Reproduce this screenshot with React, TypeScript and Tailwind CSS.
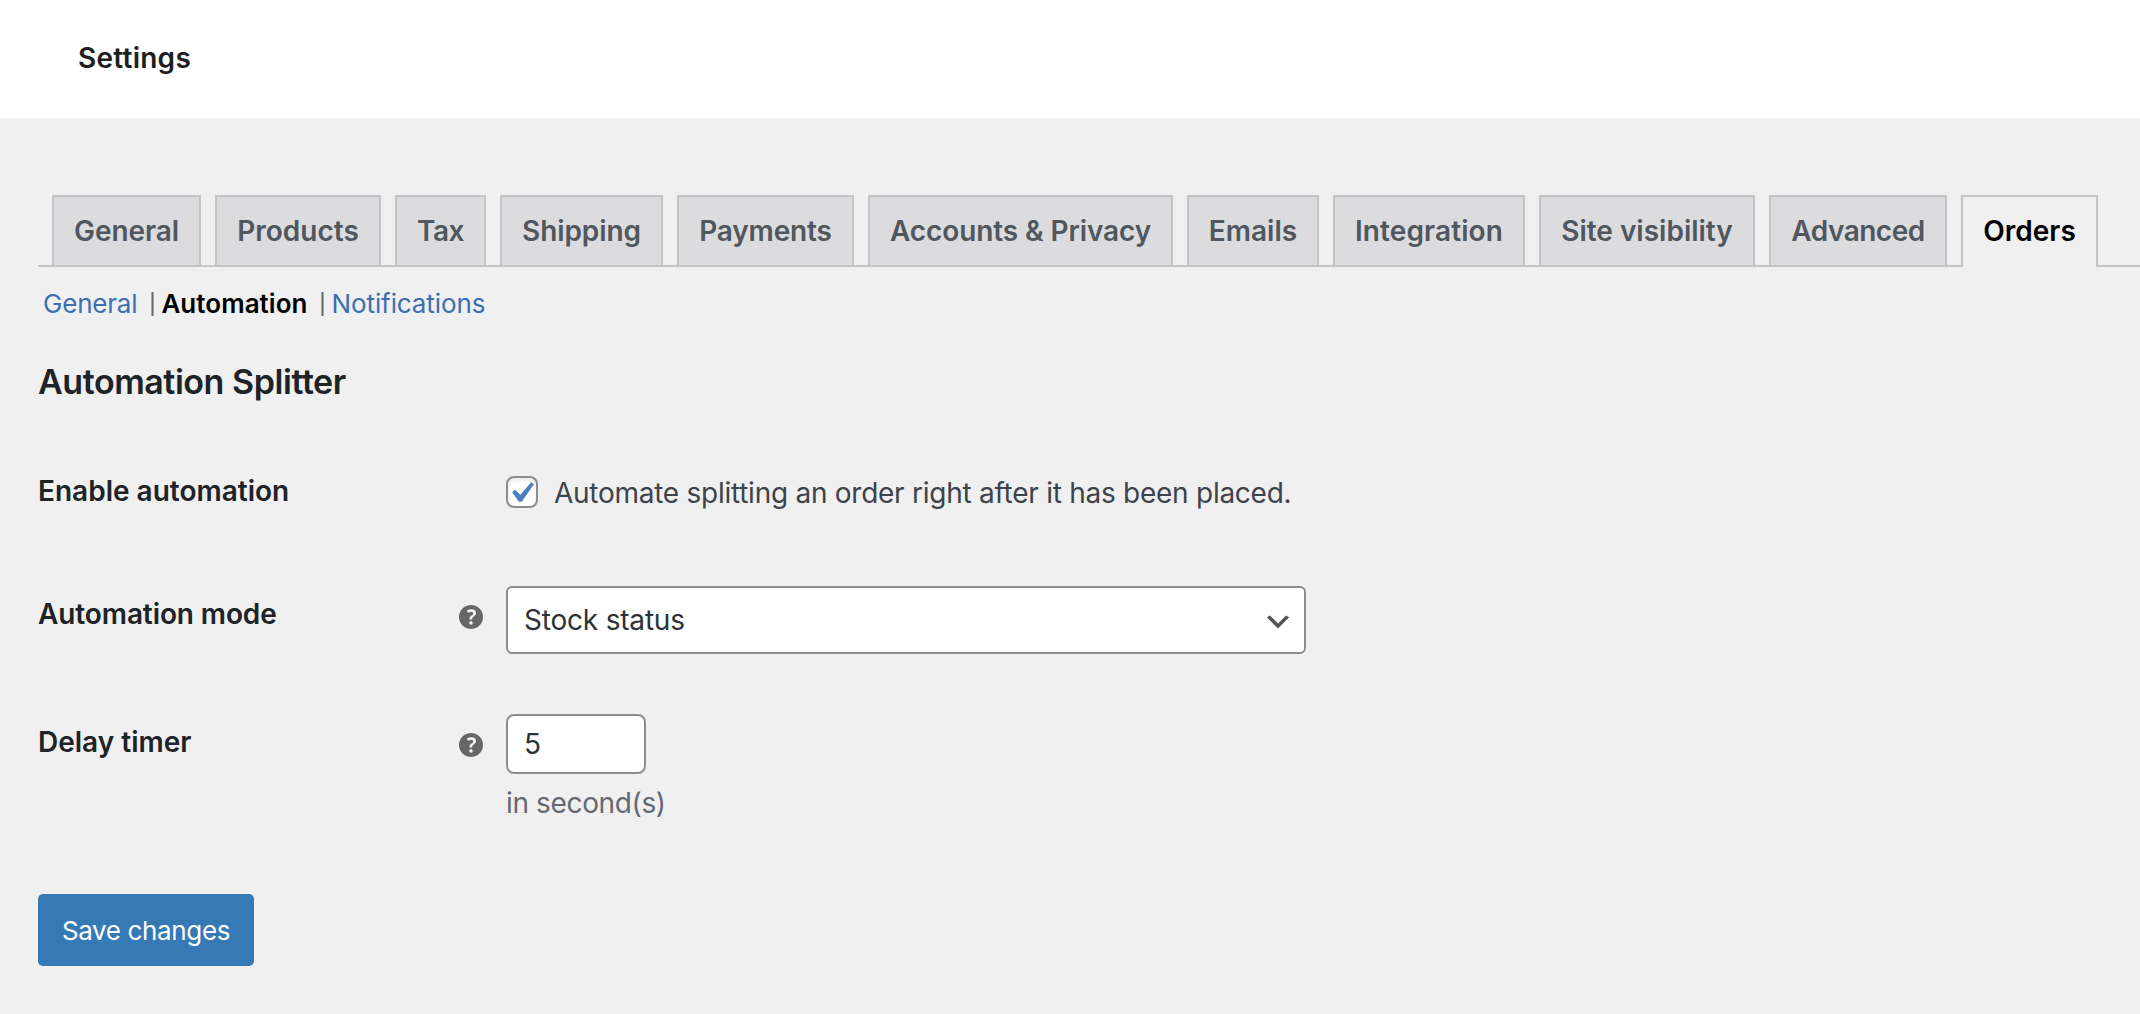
import type { ReactNode } from "react";

const tabs = [
  { label: "General", cls: "w-[149px] tracking-[-0.1px]" },
  { label: "Products", cls: "w-[166px]" },
  { label: "Tax", cls: "w-[91px] tracking-[-0.4px]" },
  { label: "Shipping", cls: "w-[163px] tracking-[-0.1px]" },
  { label: "Payments", cls: "w-[177px] tracking-[-0.15px]" },
  { label: "Accounts & Privacy", cls: "w-[305px] tracking-[-0.1px]" },
  { label: "Emails", cls: "w-[132px]" },
  { label: "Integration", cls: "w-[192px] tracking-[0.1px]" },
  { label: "Site visibility", cls: "w-[216px]" },
  { label: "Advanced", cls: "w-[178px] tracking-[-0.5px]" },
  { label: "Orders", cls: "w-[137px]", active: true },
];

function HelpIcon() {
  return (
    <svg viewBox="3 3 14 14" className="mt-[19px] size-6 shrink-0 fill-[#666666]" aria-label="Help">
      <path d="M17 10c0-3.87-3.14-7-7-7-3.87 0-7 3.13-7 7s3.13 7 7 7c3.86 0 7-3.13 7-7z" />
      <path
        className="fill-[#f0f0f0]"
        d="M10.7 11.48H9.14v-.43c0-.38.08-.7.24-.98s.46-.57.88-.89c.41-.29.68-.53.81-.71.14-.18.2-.39.2-.62 0-.25-.09-.44-.28-.58-.19-.13-.45-.19-.79-.19-.58 0-1.25.15-2 .45l-.64-1.28c.87-.49 1.8-.74 2.77-.74.81 0 1.45.2 1.92.58.48.39.71.91.71 1.55 0 .43-.09.8-.29 1.11-.19.32-.57.67-1.11 1.06-.38.28-.61.49-.71.63-.1.15-.15.34-.15.57v.47zm-1.47 2.74c-.18-.17-.27-.42-.27-.73 0-.33.08-.58.26-.75s.43-.25.77-.25c.32 0 .57.09.75.26s.27.42.27.74c0 .3-.09.55-.27.72-.18.18-.43.27-.75.27-.33 0-.58-.09-.76-.26z"
      />
    </svg>
  );
}

function Row({ label, labelClass, help, className, children }: {
  label: string;
  labelClass: string;
  help?: boolean;
  className: string;
  children: ReactNode;
}) {
  return (
    <div className={`flex items-start ${className}`}>
      <div className="flex w-[468px] shrink-0 items-start justify-between pr-[23px]">
        <span className={`font-semibold text-[#1d2327] ${labelClass}`}>{label}</span>
        {help && <HelpIcon />}
      </div>
      <div>{children}</div>
    </div>
  );
}

export default function App() {
  return (
    <div className="h-[1014px] w-full overflow-hidden bg-[#f0f0f0] font-['Inter',sans-serif] text-[28px] text-[#3c434a]">
      <header className="flex h-[118px] items-center bg-white pb-0.5 pl-[78px]">
        <h1 className="font-semibold tracking-[0.25px] text-[#1e1e1e]">Settings</h1>
      </header>

      <main className="pt-[77px] pl-[38px]">
        <nav className="flex h-[72px] gap-[14px] border-b-2 border-[#c3c4c7] pl-[14px]">
          {tabs.map((t) => (
            <a
              key={t.label}
              className={`shrink-0 border-2 border-b-0 border-[#c3c4c7] text-center leading-[68px] font-semibold whitespace-nowrap ${t.cls} ${
                t.active ? "h-[72px] bg-[#f0f0f0] text-black" : "h-[70px] bg-[#dcdcde] text-[#50575e]"
              }`}
            >
              {t.label}
            </a>
          ))}
        </nav>

        <div className="mt-[17px] flex h-10 items-center pl-[5px] text-[26px] leading-10">
          <a className="tracking-[-0.2px] text-[#3a6fb0]">General</a>
          <span className="ml-[11px] flex w-2 justify-center text-[20px] font-medium text-[#646970]">|</span>
          <a className="ml-[5px] font-semibold tracking-[0.05px] text-black">Automation</a>
          <span className="ml-[11px] flex w-2 justify-center text-[20px] font-medium text-[#646970]">|</span>
          <a className="ml-[5px] tracking-[-0.1px] text-[#3a6fb0]">Notifications</a>
        </div>

        <h2 className="mt-[34px] text-[34px] leading-[48px] font-semibold tracking-[-0.45px] text-[#1d2327]">
          Automation Splitter
        </h2>

        <Row label="Enable automation" labelClass="leading-9" className="mt-[67px] h-9">
          <label className="flex h-[38px] items-center">
            <span className="relative size-8 rounded-lg border-2 border-[#8c8c93] bg-white shadow-[inset_0_2px_4px_rgba(0,0,0,0.1)]">
              <svg viewBox="0 0 20 20" className="absolute -top-1.5 -left-2 size-[42px] max-w-none fill-[#4a80c0]">
                <path d="M14.83 4.89l1.34.94-5.81 8.38H9.02L5.78 9.67l1.34-1.25 2.57 2.4z" />
              </svg>
            </span>
            <span className="ml-4 pt-0.5 tracking-[-0.26px] whitespace-nowrap">
              Automate splitting an order right after it has been placed.
            </span>
          </label>
        </Row>

        <Row label="Automation mode" labelClass="leading-[56px] tracking-[-0.1px]" help className="mt-[77px] h-[68px]">
          <div className="relative flex h-[68px] w-[800px] items-center rounded-md border-2 border-[#8c8c93] bg-white pl-4 tracking-[-0.2px] text-[#2c3338]">
            Stock status
            <svg viewBox="0 0 20 20" className="absolute top-[18px] right-[10px] size-8 fill-[#555555]">
              <path d="M5 6l5 5 5-5 2 1-7 7-7-7 2-1z" />
            </svg>
          </div>
        </Row>

        <Row label="Delay timer" labelClass="leading-[56px]" help className="mt-[60px]">
          <div className="flex h-[60px] w-[140px] items-center rounded-lg border-2 border-[#8c8c93] bg-white pl-4 text-[#2c3338]">
            5
          </div>
          <p className="mt-[10px] leading-[38px] tracking-[-0.36px] text-[#646970]">in second(s)</p>
        </Row>

        <button className="mt-[72px] flex h-[72px] w-[216px] items-center justify-center rounded-[5px] bg-[#3579b5] text-[26px] tracking-[-0.36px] whitespace-nowrap text-white">
          Save changes
        </button>
      </main>
    </div>
  );
}
